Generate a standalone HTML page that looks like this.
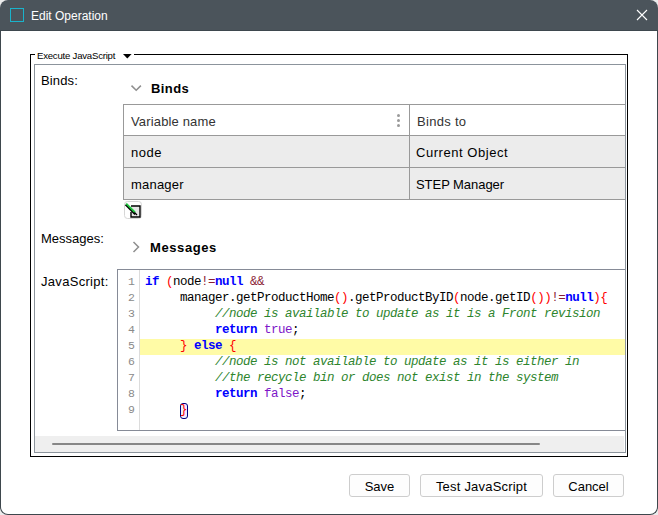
<!DOCTYPE html>
<html><head><meta charset="utf-8">
<style>
*{box-sizing:border-box;margin:0;padding:0}
html,body{width:658px;height:515px;overflow:hidden;background:#ececec}
body{position:relative;font-family:"Liberation Sans",sans-serif;font-size:13px;color:#000}
.a{position:absolute;white-space:nowrap}
#win{position:absolute;left:0;top:0;width:658px;height:515px;border-radius:8px;background:#fff;overflow:hidden}
#wb{position:absolute;left:0;top:30px;width:658px;height:485px;border:1px solid #3e474d;border-top:none;border-radius:0 0 8px 8px}
#tb{position:absolute;left:0;top:0;width:658px;height:31px;background:#4b545b;border-bottom:1px solid #3e484e}
.t{line-height:16px;height:16px}
.mono{white-space:pre;font-family:"Liberation Mono",monospace;font-size:12.5px;letter-spacing:-0.5px;line-height:16px;height:16px}
.btn{position:absolute;top:474px;height:23px;border:1px solid #cdcdcd;border-radius:3px;background:#fdfdfd;text-align:center;line-height:21px;padding-top:1px;font-size:13px}
.kw{color:#0000ff;font-weight:bold}
.br{color:#ff0000}
.op{color:#8a1c34}
.cm{color:#2e852e;font-style:italic}
.lit{color:#7d16c8}
.ln{color:#8a8a8a;text-align:right;width:17px;left:118px;font-size:11.5px;letter-spacing:0}
</style></head><body>
<div id="win"><div id="tb"></div></div>
<div id="wb"></div>
<!-- title icon -->
<div class="a" style="left:10px;top:8px;width:14px;height:14px;border:1.5px solid #1ab3cb"></div>
<div class="a" style="left:31px;top:8px;font-size:12px;line-height:16px;color:#fff">Edit Operation</div>
<svg class="a" style="left:632px;top:5px" width="20" height="20" viewBox="0 0 20 20"><path d="M5 5L15 15M15 5L5 15" stroke="#fff" stroke-width="1.1" fill="none"/></svg>

<!-- group box -->
<div class="a" style="left:30px;top:54px;width:598px;height:403px;border:1px solid #000"></div>
<div class="a" style="left:35px;top:50px;width:99px;height:10px;background:#fff"></div>
<div class="a" style="left:37px;top:50px;font-size:9.6px;letter-spacing:-0.22px;line-height:12px">Execute JavaScript</div>
<svg class="a" style="left:122px;top:53px" width="11" height="7" viewBox="0 0 11 7"><path d="M1 1H9.6L5.3 5.6Z" fill="#000"/></svg>

<!-- panel -->
<div class="a" style="left:34px;top:64px;width:592px;height:389px;border:1px solid #8c949c;overflow:hidden">
</div>
<div class="a" style="left:35px;top:436px;width:589px;height:16px;background:#efefef"></div>
<div class="a" style="left:52px;top:443px;width:488px;height:2px;background:#878787;border-radius:1px"></div>

<div class="a t" style="left:41px;top:73px;letter-spacing:0.15px">Binds:</div>
<svg class="a" style="left:130px;top:84px" width="13" height="9" viewBox="0 0 13 9"><path d="M1.5 1.6L6.2 6.3L10.9 1.6" stroke="#8f8f8f" stroke-width="1.5" fill="none"/></svg>
<div class="a t" style="left:151px;top:81px;font-weight:bold;letter-spacing:0.4px">Binds</div>

<!-- table -->
<div class="a" style="left:123px;top:104px;width:502px;height:96px;border:1px solid #999999;border-right:none;background:#fff"></div>
<div class="a" style="left:124px;top:136px;width:501px;height:31px;background:#ececec"></div>
<div class="a" style="left:124px;top:168px;width:501px;height:31px;background:#ececec"></div>
<div class="a" style="left:124px;top:135px;width:501px;height:1px;background:#999999"></div>
<div class="a" style="left:124px;top:167px;width:501px;height:1px;background:#999999"></div>
<div class="a" style="left:409px;top:105px;width:1px;height:94px;background:#999999"></div>
<div class="a t" style="left:131px;top:114px;color:#333;letter-spacing:0.15px">Variable name</div>
<div class="a t" style="left:417px;top:114px;color:#333;letter-spacing:0.3px">Binds to</div>
<div class="a" style="left:396.5px;top:113.5px;width:3px;height:3px;border-radius:50%;background:#9a9a9a"></div>
<div class="a" style="left:396.5px;top:118.5px;width:3px;height:3px;border-radius:50%;background:#9a9a9a"></div>
<div class="a" style="left:396.5px;top:123.5px;width:3px;height:3px;border-radius:50%;background:#9a9a9a"></div>
<div class="a t" style="left:131px;top:145px;letter-spacing:0.5px">node</div>
<div class="a t" style="left:416px;top:145px;letter-spacing:0.55px">Current Object</div>
<div class="a t" style="left:131px;top:177px;letter-spacing:0.2px">manager</div>
<div class="a t" style="left:416px;top:177px;letter-spacing:-0.05px">STEP Manager</div>

<!-- edit icon -->
<svg class="a" style="left:123px;top:200px" width="20" height="20" viewBox="0 0 20 20">
<rect x="1.5" y="1.5" width="17" height="17" rx="3" fill="#fff" stroke="#d6d6d6"/>
<path d="M8 6H17V17H8V12" fill="#e6e6e6" stroke="#000" stroke-width="1.4"/>
<path d="M2.6 4.6L12.2 14.2" stroke="#000" stroke-width="2"/>
<path d="M3.2 3.6L12 12.4" stroke="#1ec43c" stroke-width="1.9"/>
<path d="M11.5 12.5L14 15" stroke="#000" stroke-width="1.3"/>
</svg>

<div class="a t" style="left:41px;top:231px">Messages:</div>
<svg class="a" style="left:131px;top:240px" width="10" height="14" viewBox="0 0 10 14"><path d="M2.5 2L7.5 7L2.5 12" stroke="#8f8f8f" stroke-width="1.5" fill="none"/></svg>
<div class="a t" style="left:150px;top:240px;font-weight:bold;letter-spacing:0.6px">Messages</div>

<div class="a t" style="left:41px;top:274px;letter-spacing:0.3px">JavaScript:</div>

<!-- editor -->
<div class="a" style="left:117px;top:269px;width:508px;height:162px;border:1px solid #868b97;border-right:none;background:#fff"></div>
<div class="a" style="left:139px;top:270px;width:1px;height:160px;background:#dcdcdc"></div>
<div class="a" style="left:140px;top:339px;width:485px;height:16px;background:#fffba6"></div>
<div class="a" style="left:180px;top:403px;width:8px;height:16px;border:1px solid #000080;border-radius:3px;background:#eeeeff"></div>

<div class="a mono ln" style="top:274px">1</div>
<div class="a mono ln" style="top:290px">2</div>
<div class="a mono ln" style="top:306px">3</div>
<div class="a mono ln" style="top:322px">4</div>
<div class="a mono ln" style="top:338px">5</div>
<div class="a mono ln" style="top:354px">6</div>
<div class="a mono ln" style="top:370px">7</div>
<div class="a mono ln" style="top:386px">8</div>
<div class="a mono ln" style="top:402px">9</div>

<div class="a mono" style="left:145px;top:274px"><span class="kw">if</span> <span class="br">(</span>node<span class="op">!=</span><span class="kw">null</span> <span class="op">&amp;&amp;</span></div>
<div class="a mono" style="left:145px;top:290px">     manager.getProductHome<span class="br">()</span>.getProductByID<span class="br">(</span>node.getID<span class="br">())</span><span class="op">!=</span><span class="kw">null</span><span class="br">){</span></div>
<div class="a mono" style="left:145px;top:306px">          <span class="cm">//node is available to update as it is a Front revision</span></div>
<div class="a mono" style="left:145px;top:322px">          <span class="kw">return</span> <span class="lit">true</span>;</div>
<div class="a mono" style="left:145px;top:338px">     <span class="br">}</span> <span class="kw">else</span> <span class="br">{</span></div>
<div class="a mono" style="left:145px;top:354px">          <span class="cm">//node is not available to update as it is either in</span></div>
<div class="a mono" style="left:145px;top:370px">          <span class="cm">//the recycle bin or does not exist in the system</span></div>
<div class="a mono" style="left:145px;top:386px">          <span class="kw">return</span> <span class="lit">false</span>;</div>
<div class="a mono" style="left:145px;top:402px">     <span class="br">}</span></div>

<!-- buttons -->
<div class="btn" style="left:349px;width:61px">Save</div>
<div class="btn" style="left:420px;width:123px;letter-spacing:0.2px">Test JavaScript</div>
<div class="btn" style="left:553px;width:71px">Cancel</div>
</body></html>
